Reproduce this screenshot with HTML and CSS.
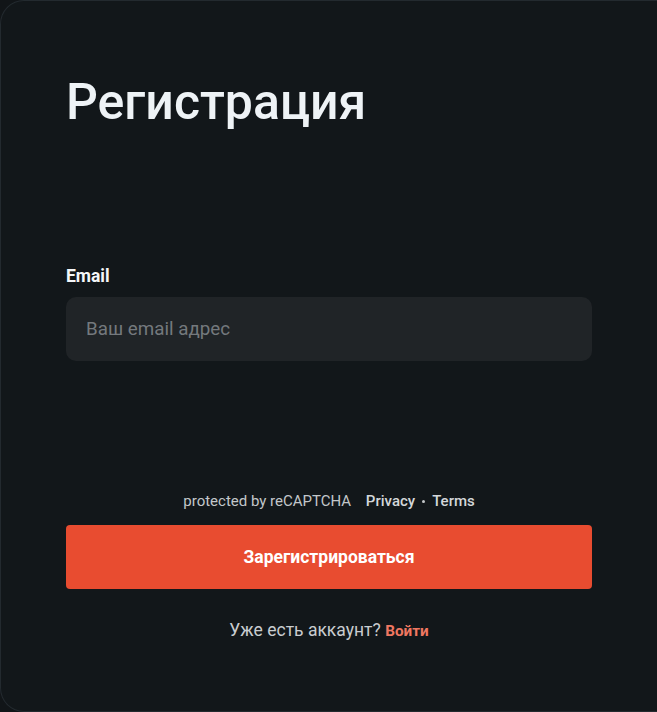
FILE: index.html
```html
<!DOCTYPE html>
<html lang="ru">
<head>
<meta charset="utf-8">
<title>Регистрация</title>
<link rel="stylesheet" href="styles.css">
</head>
<body>
<main class="card">
  <h1 class="title">Регистрация</h1>
  <form class="form">
    <label class="label" for="email">Email</label>
    <input class="input" id="email" type="email" placeholder="Ваш email адрес">
    <p class="captcha">protected by reCAPTCHA <a class="captcha-link first" href="#">Privacy</a><span class="dot"></span><a class="captcha-link" href="#">Terms</a></p>
    <button class="btn" type="button">Зарегистрироваться</button>
    <p class="login">Уже есть аккаунт? <a class="login-link" href="#">Войти</a></p>
  </form>
</main>
</body>
</html>
```
FILE: styles.css
```css
html, body {
  margin: 0;
  padding: 0;
  background: #111518;
  overflow: hidden;
}
body {
  font-family: Roboto, "Noto Sans", sans-serif;
  color: #eef2f5;
}
.card {
  box-sizing: border-box;
  height: 712px;
  background: #12171a;
  border: 1px solid #232a2f;
  border-right: none;
  border-radius: 24px 0 0 24px;
  padding: 76px 65px 0 65px;
}
.title {
  margin: 0;
  font-size: 50px;
  line-height: 1;
  font-weight: 500;
  color: #eef3f6;
}
.form {
  display: flex;
  flex-direction: column;
  margin-top: 138px;
}
.label {
  font-size: 17.5px;
  line-height: 22px;
  font-weight: 700;
  color: #f4f6f8;
}
.input {
  box-sizing: border-box;
  margin-top: 10px;
  height: 64px;
  width: 100%;
  border: none;
  outline: none;
  border-radius: 10px;
  background: #202427;
  padding: 0 20px;
  font-family: inherit;
  font-size: 18.8px;
  color: #eef2f5;
}
.input::placeholder {
  color: #74797d;
}
.captcha {
  margin: 129px 0 0;
  text-align: center;
  font-size: 15px;
  line-height: 22px;
  color: #c3c7ca;
}
.captcha-link {
  color: #d4d7da;
  font-weight: 500;
  text-decoration: none;
}
.captcha-link.first {
  margin-left: 11px;
}
.dot {
  display: inline-block;
  width: 3px;
  height: 3px;
  border-radius: 50%;
  background: #c3c7ca;
  margin: 0 7px;
  vertical-align: 3px;
}
.btn {
  margin-top: 13px;
  height: 64px;
  width: 100%;
  border: none;
  border-radius: 4px;
  background: #e84c30;
  color: #ffffff;
  font-family: inherit;
  font-size: 17.5px;
  font-weight: 700;
}
.login {
  margin: 30px 0 0;
  text-align: center;
  font-size: 17.5px;
  line-height: 22px;
  color: #c9cdd0;
}
.login-link {
  font-size: 15.3px;
  font-weight: 700;
  color: #ef7761;
  text-decoration: none;
}
```
